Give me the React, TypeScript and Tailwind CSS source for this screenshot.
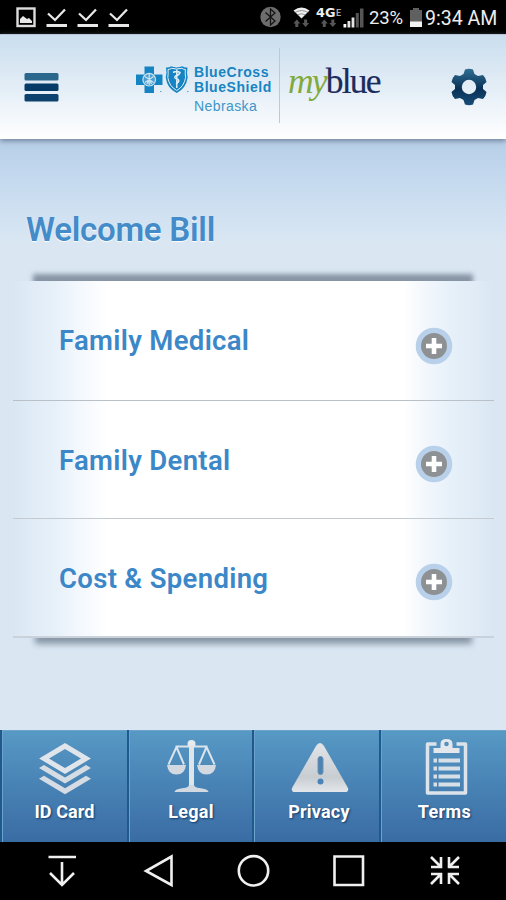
import type { ReactNode } from "react"

const plans = [
  { name: "Family Medical", row: "h-[120px] border-b border-[#b9c0c7]", icon: "mt-[46px]" },
  { name: "Family Dental", row: "h-[118px] border-b border-[#c3cad0]", icon: "mt-[44px]" },
  { name: "Cost & Spending", row: "h-[119px] border-b-2 border-[#c9d2da]", icon: "mt-[44px]" },
]

function StatusBar() {
  return (
    <div className="flex h-[34px] shrink-0 items-start justify-between bg-black text-[#ededed]">
      <svg width="140" height="34" viewBox="0 0 140 34" fill="none" stroke="#e8e8e8">
        <rect x="17.500" y="8.500" width="17" height="17.500" strokeWidth="2.400" stroke="#dcdcdc" />
        <path d="M20 23v-4l3-3 4 3 2-1 3 3v2z" fill="#e8e8e8" stroke="none" />
        {[0, 31, 62].map((x) => (
          <g key={x} transform={`translate(${x} 0)`}>
            <path d="M48 13.500l7 6.500L65 9.500" strokeWidth="2.300" />
            <path d="M46.500 25.500h20.500" strokeWidth="3" />
          </g>
        ))}
      </svg>
      <div className="flex h-[34px] items-start">
        <svg width="115" height="34" viewBox="256 0 115 34" fill="none">
          <circle cx="269.500" cy="17" r="10.200" fill="#6d6d6d" />
          <path d="M264.500 12.500l9.500 8.500-4.500 4V9l4.500 4-9.500 8.500" stroke="#151515" strokeWidth="1.300" />
          <path d="M292.500 10.500q8-5.800 16 0l-8 8z" fill="#eeeeee" />
          <path d="M293.500 12.700q7-4.200 14 0M296 15q4.500-2.500 9 0" stroke="#555" strokeWidth=".6" />
          <path
            d="M295.800 19.500l-3.500 4h2v3.500h3v-3.500h2zM304.600 27l-3.500-4h2v-3.500h3V23h2zM323.300 19.500l-3.500 4h2v3.500h3v-3.500h2zM331.800 27l-3.500-4h2v-3.500h3V23h2z"
            fill="#575757"
          />
          <path d="M342.500 24h2.800v3.500h-2.800z" fill="#fff" />
          <path d="M346.500 21h2.800v6.500h-2.800zM350.600 17.500h2.800v10h-2.800z" fill="#e4e4e4" />
          <path d="M354.800 13h3v14.500h-3zM359 8.500h3.500v19H359z" fill="#555" />
          <text x="315" y="17" fill="#eee" className="font-['DejaVu_Sans'] text-[11.500px] font-bold" textLength="19.500" lengthAdjust="spacingAndGlyphs">
            4G
          </text>
          <text x="335" y="16" fill="#aaa" className="font-['Roboto'] text-[9px] font-bold">
            E
          </text>
        </svg>
        <span className="-ml-[3px] w-[33px] pt-[6px] font-['Roboto'] text-[18.500px] leading-[24px] tracking-[-0.200px]">23%</span>
        <svg className="ml-[7px]" width="15" height="34" viewBox="0 0 15 34">
          <path d="M1 10h3V8h6v2h3v17H1z" fill="#606060" />
          <path d="M1 21.500h12V27H1z" fill="#f2f2f2" />
        </svg>
        <span className="w-[82px] whitespace-nowrap pl-[1px] pt-[6px] font-['Roboto'] text-[19.500px] leading-[25px]">
          9:34 AM
        </span>
      </div>
    </div>
  )
}

function Header() {
  return (
    <header className="relative z-10 flex h-[105px] shrink-0 items-start border-t border-[#b8c5d8] bg-linear-to-b from-[#cadeee] via-[#e3edf6] to-white shadow-[0_2px_5px_#71839a]">
      <svg className="ml-[24px] mt-[37px]" width="35" height="31" viewBox="0 0 35 31">
        <rect x=".5" y="1" width="34" height="7.500" rx="1.500" fill="#2b678c" />
        <rect x=".5" y="11.500" width="34" height="7.500" rx="1.500" fill="#053b66" />
        <rect x=".5" y="22" width="34" height="7.500" rx="1.500" fill="#0c426d" />
      </svg>
      <svg className="ml-[76px] mt-[30px]" width="56" height="30" viewBox="135 65 56 30" fill="none">
        <path d="M144.500 66.500h9.500v8h8.500V85H154v8h-9.500v-8H136V74.500h8.500z" fill="#1684c2" />
        <circle cx="149.200" cy="79.700" r="6.300" fill="#4b9fd0" stroke="#c9e2f2" strokeWidth="1.200" />
        <path d="M149.200 74v11M145 76.500l8.500 6M153.500 76.500l-8.500 6M147 84l2.200-5 2.300 5" stroke="#c9e2f2" strokeWidth="1.300" />
        <path d="M166 67.500q3 .5 5-1.200 5.700 2.200 11.500 0 2 1.700 5 1.200-1 5 .2 10-1.700 11-11 15.500-9.500-4.500-11-15.500 1.300-5 .3-10z" fill="#1684c2" />
        <path d="M168 69.500q2 0 3.500-1.200 5.200 1.500 10.400 0 1.500 1.200 3.500 1.200-.5 4 .2 8-1.500 9-8.900 13-7.400-4-8.900-13 .7-4 .2-8z" stroke="#e1eff8" strokeWidth="1" />
        <path d="M176.800 69.500V88M173 72.500q3.500-2 7 0-1 3-4.500 3.500-2 2 1.500 3 3 1 1 3.500l-2 1.500" stroke="#e1eff8" strokeWidth="1.500" />
        <path d="M160 91.500h1.500M187 91.500h1.500" stroke="#5ba9d3" />
      </svg>
      <div className="ml-[3px] mt-[30px] w-[85px] whitespace-nowrap font-['Liberation_Sans'] text-[14px] font-bold leading-[15px] text-[#1684c2]">
        <div className="tracking-[0.550px]">BlueCross</div>
        <div className="tracking-[0.550px]">BlueShield</div>
        <div className="pt-[3px] text-[14px] font-normal leading-[16px] tracking-[0.400px] text-[#3f96c9]">Nebraska</div>
      </div>
      <div className="mt-[13px] h-[75px] w-px bg-[#bdcad6]" />
      <div className="ml-[8px] mt-[24px] w-[93px] whitespace-nowrap font-['Liberation_Serif'] text-[35.500px] leading-[44px] tracking-[-1.800px]">
        <span className="italic text-[#81a93d]">my</span>
        <span className="text-[#1b2b5d] [-webkit-text-stroke:0.200px_#1b2b5d]">blue</span>
      </div>
      <svg className="ml-[69px] mt-[33px]" width="38" height="38" viewBox="-19 -19 38 38">
        <defs>
          <linearGradient id="gear" x1="0" y1="0" x2="0" y2="1">
            <stop stopColor="#2f6f93" />
            <stop offset=".55" stopColor="#0a3157" />
            <stop offset="1" stopColor="#164d78" />
          </linearGradient>
        </defs>
        <path
          d="M-4-17.500Q0-19 4-17.500L5.500-13 9-11 14-12Q17-9 17.500-5L14-2V2L17.500 5Q17 9 14 12L9 11 5.500 13 4 17.500Q0 19-4 17.500L-5.500 13-9 11-14 12Q-17 9-17.500 5L-14 2V-2L-17.500-5Q-17-9-14-12L-9-11-5.500-13ZM0-7.200A7.200 7.200 0 1 0 0 7.200 7.200 7.200 0 1 0 0-7.200Z"
          fill="url(#gear)"
          fillRule="evenodd"
        />
      </svg>
    </header>
  )
}

function PlusIcon() {
  return (
    <svg width="38" height="38" viewBox="0 0 38 38">
      <circle cx="19" cy="19" r="18.300" fill="#b9d0ea" />
      <circle cx="19" cy="19" r="13" fill="#8d9194" />
      <path d="M19 11v16M11 19h16" stroke="#fff" strokeWidth="4.600" />
    </svg>
  )
}

function PlanList() {
  return (
    <div className="relative ml-[13px] mr-[12px] mt-[30px]">
      {/* shadows above and below the panel */}
      <div className="absolute -top-[7px] left-[20px] h-[16px] w-[440px] bg-[#8694a3] blur-[2.500px]" />
      <div className="absolute -bottom-[6px] left-[22px] h-[16px] w-[437px] bg-[#8796a4] blur-[3px]" />
      <div className="relative bg-[linear-gradient(90deg,#dae7f3_0px,#e6f0f9_40px,#f5f9fd_70px,#fff_95px,#fff_390px,#f1f6fc_415px,#e6f0f9_440px,#dae7f3_481px)]">
        {plans.map((plan) => (
          <button key={plan.name} className={`flex w-full items-start text-left ${plan.row}`}>
            <span className="ml-[46px] mt-[42px] whitespace-nowrap font-['Roboto'] text-[27.500px] font-semibold leading-[36px] tracking-[0.320px] text-[#3c87c7]">
              {plan.name}
            </span>
            <span className={`ml-auto mr-[41px] ${plan.icon}`}>
              <PlusIcon />
            </span>
          </button>
        ))}
      </div>
    </div>
  )
}

function Tab({ label, labelClass, children }: { label: string; labelClass: string; children: ReactNode }) {
  return (
    <button className="flex flex-col items-center border-l-2 border-[#1f5a8e] bg-linear-to-b from-[#5799c5] to-[#3a6ca4] shadow-[inset_1px_1px_0_#6ca2cb]">
      <svg className="mt-[8px]" width="66" height="60" viewBox="-3 0 66 60" fill="none">
        {children}
      </svg>
      <span className={`whitespace-nowrap pt-[2px] font-['Roboto'] text-[18px] font-bold leading-[24px] text-white [text-shadow:1px_1px_2px_#123d6b] ${labelClass}`}>
        {label}
      </span>
    </button>
  )
}

function TabBar() {
  return (
    <nav className="grid h-[112px] shrink-0 grid-cols-[127px_125px_127px_127px]">
      <Tab label="ID Card" labelClass="tracking-[0.100px]">
        <path d="M30 8L51 20.500 30 33 9 20.500z" stroke="#dfe5eb" strokeWidth="5" />
        <path d="M4 30l5-3 21 12.500L51 27l5 3-26 15.500zM4 40.800l5-3 21 12.500 21-12.500 5 3-26 15.500z" fill="#d6dce3" />
      </Tab>
      <Tab label="Legal" labelClass="pl-px tracking-[0.300px]">
        <g transform="translate(.5 0)">
          <path d="M30 5v45" stroke="#dfe5eb" strokeWidth="5" />
          <circle cx="30" cy="6" r="4" fill="#e7ebef" />
          <path d="M14 8.500h32M15 9L7 26.500M15 9l7.500 17.500M45 9l-7.500 17.500M45 9l8 17.500" stroke="#dce4eb" strokeWidth="2" />
          <path d="M5.500 27h19q-1 9.500-9.500 9.500T5.500 27M35.500 27h19q-1 9.500-9.500 9.500T35.500 27M13 54q0-3 9-4 5-.5 5.500-3h5q.500 2.500 5.500 3 9 1 9 4z" fill="#d2d9e0" />
        </g>
      </Tab>
      <Tab label="Privacy" labelClass="pl-[5px] tracking-[0.200px]">
        <g transform="translate(3 0)">
          <path d="M26 8q4-6 8 0l24 42q1 4-3 4H5q-4 0-3-4z" fill="url(#metal)" />
          <rect x="28" y="18.500" width="5" height="18" rx="2.500" fill="#4a84b7" stroke="#6f90ae" />
          <circle cx="30.500" cy="43.500" r="3" fill="#4a84b7" />
        </g>
        <defs>
          <linearGradient id="metal" x1="0" y1="0" x2="0" y2="1">
            <stop stopColor="#e2e5e8" />
            <stop offset=".7" stopColor="#c8cdd2" />
            <stop offset="1" stopColor="#e3e7eb" />
          </linearGradient>
        </defs>
      </Tab>
      <Tab label="Terms" labelClass="pl-[2px] tracking-[0.400px]">
        <g transform="translate(.5 0)">
          <path d="M22 6h-9v49h38V6h-9" stroke="#dce3ea" strokeWidth="3.500" strokeLinejoin="round" />
          <path d="M19 15v-5h7V6q0-5 6-5t6 5v4h7v5z" fill="#e4e8ec" />
          <circle cx="32" cy="6" r="2.300" fill="#5590bf" />
          <path d="M19 22.500h3.500M24 22.500h21.500M19 30.500h3.500M24 30.500h21.500M19 38.500h3.500M24 38.500h21.500M19 46.500h3.500M24 46.500h21.500" stroke="#d7dfe7" strokeWidth="4" />
        </g>
      </Tab>
    </nav>
  )
}

function NavigationBar() {
  return (
    <div className="flex h-[58px] shrink-0 bg-black">
      <svg width="506" height="58" viewBox="0 842 506 58" fill="none" stroke="#f0f0f0" strokeWidth="2.600">
        <path d="M48.500 857H76M62 862v23M50 873l12 12 12-12M171.500 856.500v28.500L146 871z" />
        <circle cx="253.500" cy="870.800" r="14.700" />
        <path d="M334.500 856.500H363v28.500h-28.500z" />
        <path d="M431 857l9 9M441 857v10h-10M459 857l-9 9M449 857v10h10M431 884l9-9M431 874h10v10M459 884l-9-9M449 884v-10h10" />
      </svg>
    </div>
  )
}

export default function App() {
  return (
    <div className="flex h-[900px] w-[506px] flex-col overflow-hidden bg-[#dae7f3] font-['Roboto',sans-serif]">
      <StatusBar />
      <Header />
      <main className="flex-1 bg-[linear-gradient(180deg,#b6cee8_0px,#c5daef_42px,#dae7f3_105px)] pt-[69px]">
        <h1 className="ml-[26px] whitespace-nowrap text-[33px] font-semibold leading-[43px] tracking-[-0.250px] text-[#438bc9] [text-shadow:0_1px_1px_white]">
          Welcome Bill
        </h1>
        <PlanList />
      </main>
      <TabBar />
      <NavigationBar />
    </div>
  )
}
